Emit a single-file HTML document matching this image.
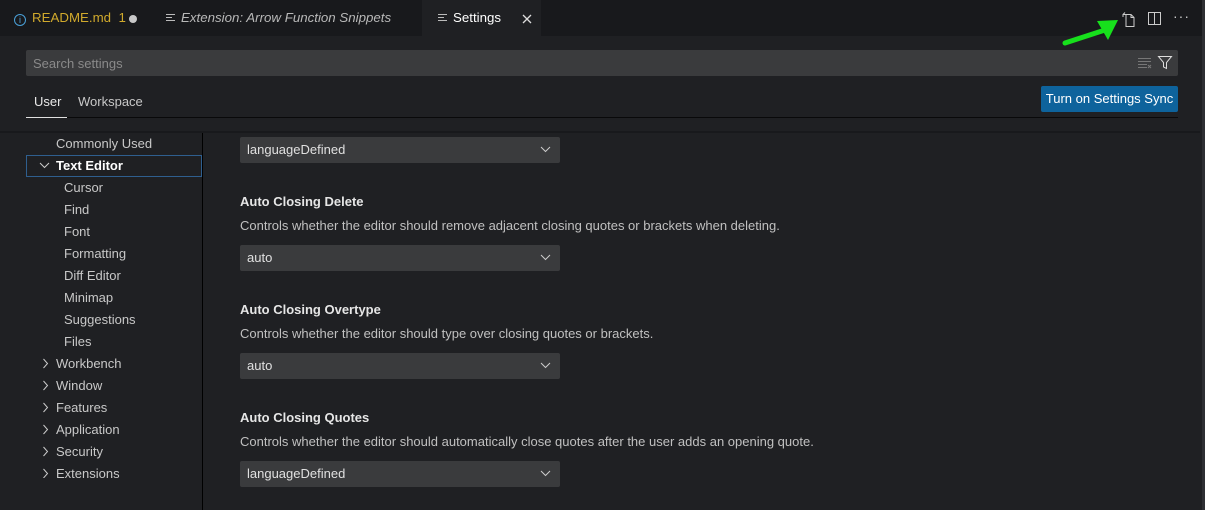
<!DOCTYPE html>
<html><head><meta charset="utf-8"><style>
*{margin:0;padding:0;box-sizing:border-box}
body{width:1205px;height:510px;background:#1f2023;font-family:"Liberation Sans",sans-serif;color:#ccc;position:relative;overflow:hidden;font-size:13px}
.abs{position:absolute}
.tabbar{left:0;top:0;width:1205px;height:36px;background:#18191c}
.tab{top:0;height:36px;line-height:36px;font-size:13.3px;white-space:nowrap}
.lines{display:inline-block;width:9px;height:9px;vertical-align:-1px;margin-right:6px;background:linear-gradient(#bbb,#bbb) 0 0/9px 1px no-repeat,linear-gradient(#bbb,#bbb) 0 3px/6px 1px no-repeat,linear-gradient(#bbb,#bbb) 0 6px/9px 1px no-repeat,linear-gradient(#bbb,#bbb) 0 9px/6px 1px no-repeat}
.side{font-size:13px;color:#c8c8c8;height:22px;line-height:22px}
.dd{left:240px;width:320px;height:26px;background:#3a3b3d;border-radius:2px;line-height:26px;padding-left:7px;color:#e0e0e0;font-size:13px}
.dd svg{position:absolute;right:9px;top:9px}
.h{left:240px;font-weight:bold;color:#e6e6e6;font-size:13px}
.d{left:240px;color:#c0c0c0;font-size:13px}
</style></head><body>
<div class="abs tabbar"></div>
<div class="abs tab" style="left:14px;color:#d0a92c"><span style="display:inline-block;width:12px;height:12px;border:1px solid #4aa0d8;border-radius:50%;font-size:9px;line-height:10px;text-align:center;color:#4aa0d8;vertical-align:-1px;margin-right:6px">i</span>README.md&nbsp; 1</div>
<div class="abs" style="left:129px;top:15px;width:8px;height:8px;border-radius:50%;background:#c8c8c8"></div>
<div class="abs tab" style="left:166px;color:#b8b8b8;font-style:italic"><span class="lines"></span>Extension: Arrow Function Snippets</div>
<div class="abs" style="left:422px;top:0;width:119px;height:36px;background:#1f2023"></div>
<div class="abs tab" style="left:438px;color:#fff"><span class="lines"></span>Settings</div>
<svg class="abs" style="left:522px;top:14px" width="10" height="10" viewBox="0 0 10 10" stroke="#ddd" stroke-width="1.3"><path d="M1 1l8 8M9 1l-8 8"/></svg>
<svg class="abs" style="left:1120px;top:10px" width="18" height="18" viewBox="0 0 18 18" fill="none" stroke="#ccc" stroke-width="1"><path d="M6 4.5h5l3 3v9H6z M11 4.5v3h3 M3 7V4.5h3 M3 4.5l2-2"/></svg>
<svg class="abs" style="left:1147px;top:11px" width="15" height="15" viewBox="0 0 15 15" fill="none" stroke="#ccc"><rect x="1.5" y="1.5" width="12" height="12"/><path d="M7.5 1.5v12"/></svg>
<div class="abs" style="left:1173px;top:8px;color:#ccc;font-size:14px;letter-spacing:1px">···</div>
<svg class="abs" style="left:1060px;top:18px" width="62" height="30" viewBox="0 0 62 30"><path d="M5 25 L45 12" stroke="#17e01c" stroke-width="5" stroke-linecap="round"/><path d="M37 3 L58 2 L48 22z" fill="#17e01c"/></svg>
<div class="abs" style="left:26px;top:50px;width:1152px;height:26px;background:#3a3b3d;border-radius:2px"></div>
<div class="abs" style="left:33px;top:56px;color:#8a8a8a;font-size:13px">Search settings</div>
<svg class="abs" style="left:1137px;top:56px" width="16" height="14" viewBox="0 0 16 14" stroke="#777"><path d="M1 2.5h13M1 5.5h13M1 8.5h9M1 11.5h9M11 9l3 3M14 9l-3 3"/></svg>
<svg class="abs" style="left:1157px;top:55px" width="16" height="15" viewBox="0 0 16 15" fill="none" stroke="#ddd"><path d="M1.5 1.5h13l-5 6v6l-3-1.5v-4.5z"/></svg>
<div class="abs" style="left:34px;top:94px;color:#e8e8e8">User</div>
<div class="abs" style="left:78px;top:94px;color:#c8c8c8">Workspace</div>
<div class="abs" style="left:26px;top:117px;width:1152px;height:1px;background:#000;opacity:.7"></div>
<div class="abs" style="left:26px;top:117px;width:41px;height:1px;background:#e0e0e0"></div>
<div class="abs" style="left:1041px;top:86px;width:137px;height:26px;background:#0e639c;border-radius:2px;color:#fff;line-height:26px;text-align:center;font-size:13px">Turn on Settings Sync</div>
<div class="abs" style="left:0;top:131px;width:1200px;height:2px;background:#18191c"></div>
<div class="abs" style="left:202px;top:133px;width:1px;height:377px;background:#000"></div>
<div class="abs" style="left:1202px;top:0;width:3px;height:510px;background:#2e2f33"></div>

<div class="abs side" style="left:56px;top:133px">Commonly Used</div>
<div class="abs" style="left:26px;top:155px;width:176px;height:22px;border:1px solid #2f5f8f"></div>
<svg class="abs" style="left:39px;top:162px" width="11" height="7" viewBox="0 0 11 7" fill="none" stroke="#ccc"><path d="M1 1l4.5 4.5L10 1"/></svg>
<div class="abs side" style="left:56px;top:155px;color:#fff;font-weight:bold">Text Editor</div>
<div class="abs side" style="left:64px;top:177px">Cursor</div>
<div class="abs side" style="left:64px;top:199px">Find</div>
<div class="abs side" style="left:64px;top:221px">Font</div>
<div class="abs side" style="left:64px;top:243px">Formatting</div>
<div class="abs side" style="left:64px;top:265px">Diff Editor</div>
<div class="abs side" style="left:64px;top:287px">Minimap</div>
<div class="abs side" style="left:64px;top:309px">Suggestions</div>
<div class="abs side" style="left:64px;top:331px">Files</div>
<div class="abs side" style="left:56px;top:353px">Workbench</div>
<div class="abs side" style="left:56px;top:375px">Window</div>
<div class="abs side" style="left:56px;top:397px">Features</div>
<div class="abs side" style="left:56px;top:419px">Application</div>
<div class="abs side" style="left:56px;top:441px">Security</div>
<div class="abs side" style="left:56px;top:463px">Extensions</div>
<svg class="abs" style="left:42px;top:358px" width="7" height="120" viewBox="0 0 7 120" fill="none" stroke="#ccc"><path d="M1.5 1l4 4.5-4 4.5M1.5 23l4 4.5-4 4.5M1.5 45l4 4.5-4 4.5M1.5 67l4 4.5-4 4.5M1.5 89l4 4.5-4 4.5M1.5 111l4 4.5-4 4.5"/></svg>

<div class="abs dd" style="top:137px">languageDefined<svg width="11" height="7" viewBox="0 0 11 7" fill="none" stroke="#ccc"><path d="M1 1l4.5 4.5L10 1"/></svg></div>
<div class="abs h" style="top:194px">Auto Closing Delete</div>
<div class="abs d" style="top:218px">Controls whether the editor should remove adjacent closing quotes or brackets when deleting.</div>
<div class="abs dd" style="top:245px">auto<svg width="11" height="7" viewBox="0 0 11 7" fill="none" stroke="#ccc"><path d="M1 1l4.5 4.5L10 1"/></svg></div>
<div class="abs h" style="top:302px">Auto Closing Overtype</div>
<div class="abs d" style="top:326px">Controls whether the editor should type over closing quotes or brackets.</div>
<div class="abs dd" style="top:353px">auto<svg width="11" height="7" viewBox="0 0 11 7" fill="none" stroke="#ccc"><path d="M1 1l4.5 4.5L10 1"/></svg></div>
<div class="abs h" style="top:410px">Auto Closing Quotes</div>
<div class="abs d" style="top:434px">Controls whether the editor should automatically close quotes after the user adds an opening quote.</div>
<div class="abs dd" style="top:461px">languageDefined<svg width="11" height="7" viewBox="0 0 11 7" fill="none" stroke="#ccc"><path d="M1 1l4.5 4.5L10 1"/></svg></div>
</body></html>
